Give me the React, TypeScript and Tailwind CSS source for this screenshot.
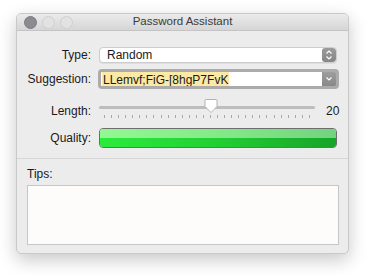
import React from 'react';

const ticks = Array.from({ length: 30 }, (_, i) => i);

function TrafficLights() {
  return (
    <div className="absolute left-[7px] top-[2px] flex gap-[5px]">
      <div className="w-[13px] h-[13px] rounded-full bg-[#8c8b90] border border-[#7c7b80]" />
      <div className="w-[13px] h-[13px] rounded-full bg-[#e2e1e3] border border-[#cfcecf]" />
      <div className="w-[13px] h-[13px] rounded-full bg-[#e2e1e3] border border-[#cfcecf]" />
    </div>
  );
}

function Label({ children }: { children: React.ReactNode }) {
  return <div className="w-[75px] pr-[1px] text-right text-[12px] text-[#1a1a1a]">{children}</div>;
}

export default function App() {
  return (
    <div
      className="w-[366px] h-[275px] bg-white pt-[13px] pl-[16px]"
      style={{ fontFamily: '"Helvetica Neue", "Liberation Sans", Arial, sans-serif' }}
    >
      <div className="w-[333px] h-[241px] flex flex-col bg-[#ececec] rounded-[5px] border border-[#c9c9c9] shadow-[0_6px_18px_rgba(0,0,0,0.22)] overflow-hidden">
        {/* Title bar */}
        <div className="relative h-[17px] shrink-0 flex items-center justify-center bg-gradient-to-b from-[#ebebeb] to-[#d6d6d6] border-b border-[#c4c4c4]">
          <TrafficLights />
          <span className="text-[11.5px] text-[#3a3a3a] leading-none">Password Assistant</span>
        </div>

        {/* Type */}
        <div className="flex items-center mt-[16px] h-[16px]">
          <Label>Type:</Label>
          <div className="ml-[7px] w-[238px] h-[16px] flex bg-white rounded-[4px] border border-[#cdcdcd] shadow-[0_1px_0_rgba(0,0,0,0.06)] overflow-hidden">
            <div className="flex-1 pl-[7px] text-[12px] leading-[14px] text-[#1a1a1a]">Random</div>
            <div className="w-[14px] flex flex-col items-center justify-center rounded-[3px] bg-gradient-to-b from-[#9b9b9b] to-[#868686]">
              <svg width="8" height="12" viewBox="0 0 8 12" fill="none" stroke="white" strokeWidth="1.2">
                <path d="M1.5 4.5 L4 2 L6.5 4.5" />
                <path d="M1.5 7.5 L4 10 L6.5 7.5" />
              </svg>
            </div>
          </div>
        </div>

        {/* Suggestion */}
        <div className="flex items-center mt-[6px] h-[20px]">
          <Label>Suggestion:</Label>
          <div className="ml-[6px] w-[241px] h-[20px] flex rounded-[4px] border-[3px] border-[#ababab] overflow-hidden bg-white">
            <div className="flex-1 flex items-stretch pl-[1px]">
              <span className="flex items-center bg-[#fde9a6] text-[12px] leading-[14px] text-[#1a1a1a] px-[1px] pt-[1px]">
                LLemvf;FiG-[8hgP7FvK
              </span>
            </div>
            <div className="w-[14px] flex items-center justify-center bg-gradient-to-b from-[#9d9d9d] to-[#888888]">
              <svg width="8" height="6" viewBox="0 0 8 6" fill="none" stroke="white" strokeWidth="1.2">
                <path d="M1.5 1.5 L4 4 L6.5 1.5" />
              </svg>
            </div>
          </div>
        </div>

        {/* Length */}
        <div className="flex items-center mt-[13px] h-[18px]">
          <Label>Length:</Label>
          <div className="ml-[7px] w-[216px] h-[18px] flex flex-col">
            <div className="relative h-[10px] flex items-center">
              <div className="w-full h-[3px] rounded-full bg-[#bdbdbd]" />
              <svg className="absolute left-[105px] top-[-4px]" width="14" height="16" viewBox="0 0 14 16">
                <path
                  d="M2 1.5 H12 Q13 1.5 13 2.5 V8.5 L7 14.5 L1 8.5 V2.5 Q1 1.5 2 1.5 Z"
                  fill="white"
                  stroke="#b3b3b3"
                  strokeWidth="1"
                />
              </svg>
            </div>
            <div className="mt-[3px] px-[5px] flex justify-between">
              {ticks.map((t) => (
                <div key={t} className="w-[1px] h-[3px] bg-[#a8a8a8]" />
              ))}
            </div>
          </div>
          <div className="ml-[11px] text-[12px] text-[#1a1a1a]">20</div>
        </div>

        {/* Quality */}
        <div className="flex items-center mt-[8px] h-[20px]">
          <Label>Quality:</Label>
          <div className="ml-[7px] w-[238px] h-[20px] flex flex-col rounded-[4px] border border-[#6e6e6e] overflow-hidden">
            <div className="h-[9px] bg-gradient-to-r from-[#92f893] via-[#84ea88] to-[#72d37f]" />
            <div className="flex-1 bg-gradient-to-r from-[#2ceb3d] via-[#22cf33] to-[#17a428]" />
          </div>
        </div>

        {/* Separator */}
        <div className="mt-[10px] h-[1px] bg-[#d6d6d6]" />

        {/* Tips */}
        <div className="mt-[8px] pl-[10px] text-[12px] text-[#1a1a1a] leading-[14px]">Tips:</div>
        <div className="mt-[4px] ml-[10px] w-[312px] h-[60px] bg-[#fdfcfb] border border-[#c6c6c6]" />
      </div>
    </div>
  );
}
